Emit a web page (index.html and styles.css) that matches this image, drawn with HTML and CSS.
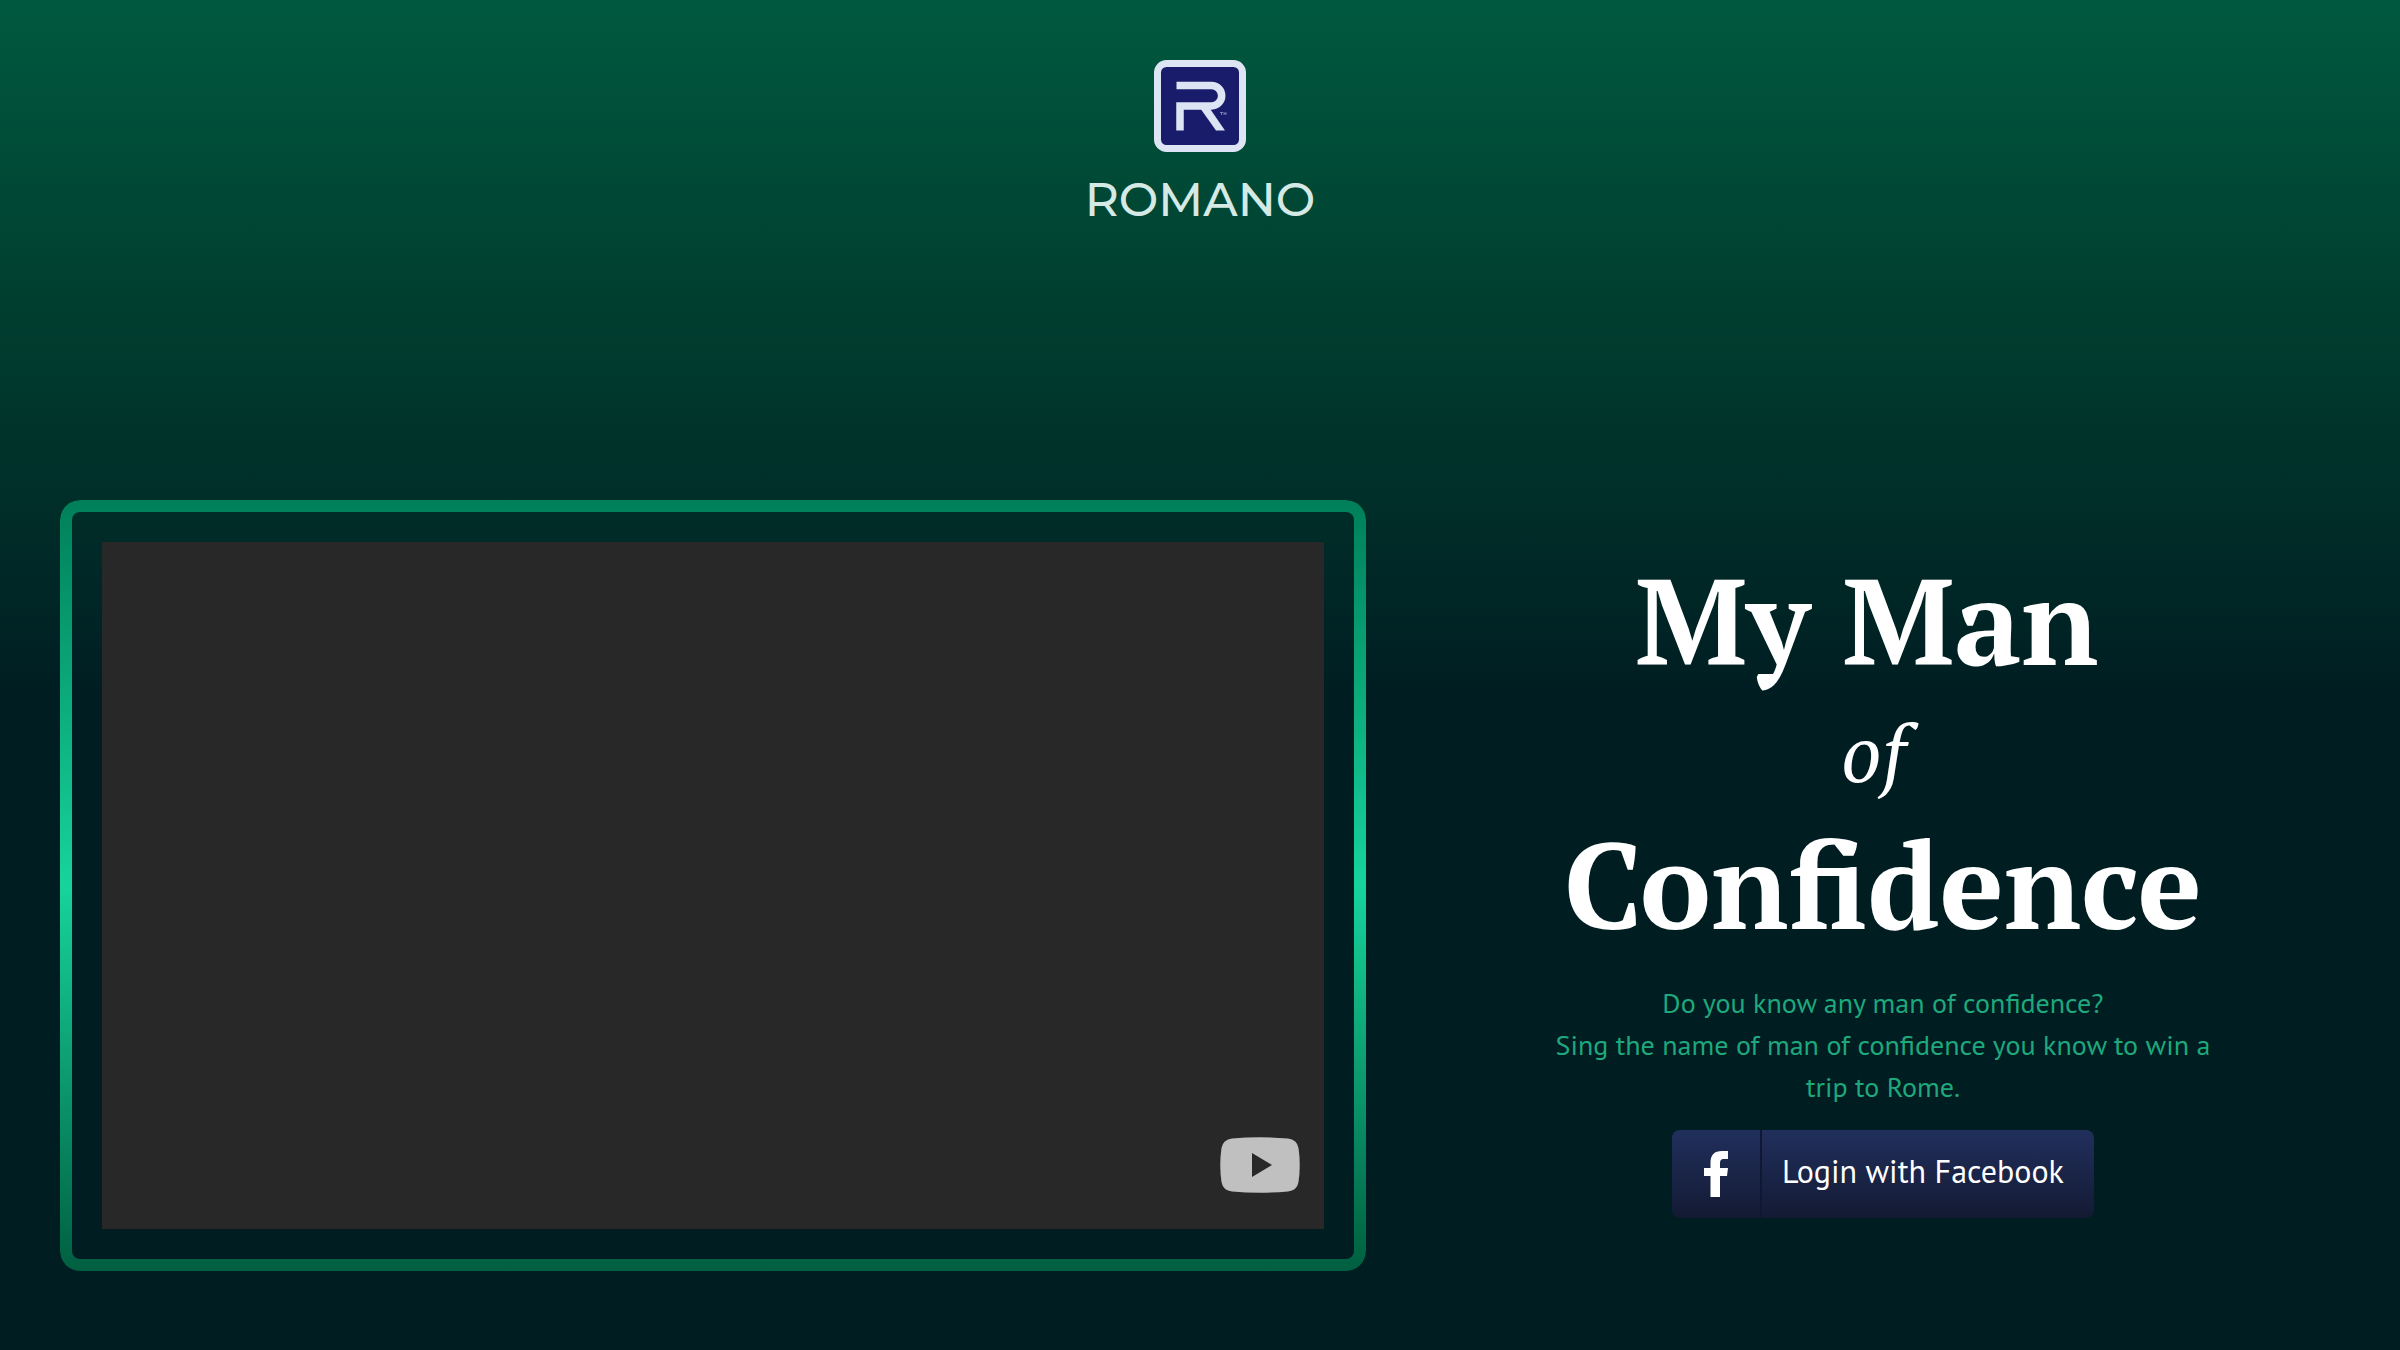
FILE: index.html
```html
<!DOCTYPE html>
<html lang="en">
<head>
    <meta charset="UTF-8">
    <meta name="viewport" content="width=device-width, initial-scale=1.0">
    <title>Romano - My Man of Confidence</title>
    <link rel="stylesheet" href="styles.css">
</head>
<body>
    <header class="header">
        <a class="logo" href="#">
            <svg class="logo-mark" viewBox="0 0 92 92" aria-hidden="true">
                <rect x="3.5" y="3.5" width="85" height="85" rx="9" fill="#181c6b" stroke="#dde4f3" stroke-width="7"/>
                <path d="M22.5 25.500H57.500a10.200 10.200 0 0 1 0 20.400H26V70.500" fill="none" stroke="#dde4f3" stroke-width="7.5"/>
                <path d="M46 48H55.500L71 70.500H62Z" fill="#dde4f3"/>
                <path d="M66 52.500h3M67.500 52.500v2.500M70 55v-2.500l1 1.500 1-1.500V55" fill="none" stroke="#8f95c4" stroke-width=".8"/>
            </svg>
            <span class="logo-name">ROMANO</span>
        </a>
    </header>

    <main class="main">
        <section class="video-frame">
            <div class="video">
                <button class="play-btn" type="button" aria-label="Play video">
                    <svg viewBox="0 0 80 56" aria-hidden="true">
                        <path d="M12 1.500Q40-1 68 1.500Q77 2.500 78.500 11Q81 28 78.500 45Q77 53.500 68 54.500Q40 57 12 54.500Q3 53.500 1.500 45Q-1 28 1.500 11Q3 2.500 12 1.500Z" fill="#c0c0c0"/>
                        <path d="M32 16L52 28L32 40Z" fill="#282828"/>
                    </svg>
                </button>
            </div>
        </section>

        <section class="intro">
            <h1 class="title">
                <span>My Man&nbsp;</span>
                <em>of&nbsp;</em>
                <span>Confidence</span>
            </h1>
            <p class="text">Do you know any man of confidence?<br>Sing the name of man of confidence you know to win a trip to Rome.</p>
            <button class="login-btn" type="button">
                <span class="login-icon">
                    <svg viewBox="0 0 24 46" aria-hidden="true">
                        <path d="M24 0v8h-4.500Q16 8 16 12v5h8l-1 8h-7v21H6.500V25H0v-8h6.500v-5.500Q6.500 0 18 0Z" fill="#fff"/>
                    </svg>
                </span>
                <span class="login-label">Login with Facebook</span>
            </button>
        </section>
    </main>
</body>
</html>
```
FILE: styles.css
```css
* {
    margin: 0;
    padding: 0;
    box-sizing: border-box;
}

body {
    min-height: 100vh;
    background: #001d22 linear-gradient(180deg, #00593f 0%, #003e2f 23%, #001d22 52%) no-repeat;
    color: #fff;
    font-family: 'PT Sans', 'Open Sans', sans-serif;
}

.header {
    display: flex;
    justify-content: center;
    padding: 60px 60px 280px;
}

.logo {
    display: flex;
    flex-direction: column;
    align-items: center;
    gap: 28px;
    text-decoration: none;
}

.logo-mark {
    display: block;
    width: 92px;
    height: 92px;
}

.logo-name {
    font-family: Montserrat, Lato, sans-serif;
    font-size: 47px;
    line-height: 40px;
    font-weight: 500;
    color: #d5e9e5;
}

.main {
    display: grid;
    grid-template-columns: 10fr 7fr;
    gap: 60px;
    padding: 0 60px 80px;
}

.video-frame {
    position: relative;
    padding: 42px;
}

/* gradient border with rounded corners */
.video-frame::before {
    content: '';
    position: absolute;
    inset: 0;
    padding: 12px;
    border-radius: 20px;
    background: linear-gradient(180deg, #007f59 0%, #17d49c 50%, #005f40 100%);
    -webkit-mask: linear-gradient(#000 0 0) content-box exclude, linear-gradient(#000 0 0);
    mask: linear-gradient(#000 0 0) content-box exclude, linear-gradient(#000 0 0);
    pointer-events: none;
}

.video {
    display: flex;
    align-items: flex-end;
    justify-content: flex-end;
    aspect-ratio: 16 / 9;
    padding: 36px 24px;
    background: #282828;
}

.play-btn {
    width: 80px;
    height: 56px;
    border: none;
    background: none;
    cursor: pointer;
}

.play-btn svg {
    display: block;
}

.intro {
    padding: 54px 120px 0;
    text-align: center;
}

.title {
    font-family: 'PT Serif', 'DejaVu Serif Condensed', 'DejaVu Serif', serif;
    font-size: 120px;
    line-height: 132px;
    font-weight: 700;
}

.title span,
.title em {
    display: block;
}

.title em {
    font-size: 80px;
    font-weight: 400;
}

.text {
    margin: 32px 0 22px;
    font-size: 28px;
    line-height: 42px;
    color: #1fa87c;
}

.login-btn {
    display: inline-flex;
    height: 88px;
    border: none;
    border-radius: 8px;
    background: linear-gradient(180deg, #212f5c 0%, #131a33 100%);
    color: #fff;
    font-family: inherit;
    font-size: 32px;
    overflow: hidden;
    cursor: pointer;
}

.login-icon {
    display: flex;
    align-items: center;
    justify-content: center;
    width: 90px;
    height: 100%;
    border-right: 2px solid #0f1733;
}

.login-icon svg {
    width: 24px;
    height: 46px;
}

.login-label {
    padding: 0 30px 0 20px;
    line-height: 82px;
    white-space: nowrap;
}
```
